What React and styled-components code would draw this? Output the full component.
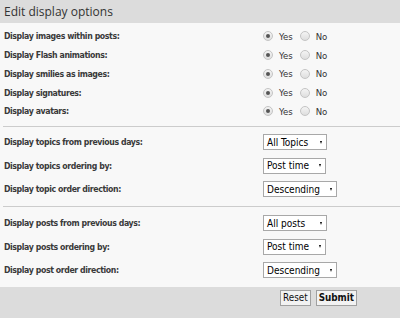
import styled, { createGlobalStyle } from "styled-components";

const GlobalStyle = createGlobalStyle`
	html, body {
		margin: 0;
		padding: 0;
		background: #f8f8f8;
	}
`;

const Panel = styled.div`
	width: 400px;
	height: 318px;
	background: #f8f8f8;
	font-family: "DejaVu Sans Condensed", "DejaVu Sans", sans-serif;
	color: #333;
	display: flex;
	flex-direction: column;
`;

const Header = styled.div`
	height: 23px;
	background: #dcdcdc;
	display: flex;
	align-items: center;
	padding-left: 4px;
	font-family: "Open Sans", sans-serif;
	font-size: 12px;
	color: #333;
`;

const Section = styled.div`
	padding: ${({ $pad }) => $pad};
	margin-left: 3px;
	border-bottom: ${({ $last }) => ($last ? "none" : "1px solid #cccccc")};
`;

const Row = styled.div`
	display: grid;
	grid-template-columns: 260px 1fr;
	align-items: center;
	height: ${({ $h }) => $h}px;
`;

const Label = styled.div`
	padding-left: 1px;
	font-size: 8.7px;
	font-weight: bold;
	letter-spacing: -0.4px;
	color: #3a3a3a;
	white-space: nowrap;
`;

const Options = styled.div`
	display: flex;
	align-items: center;
	font-size: 9.5px;
	color: #333;
`;

const Radio = styled.span`
	width: 8px;
	height: 8px;
	border-radius: 50%;
	border: 1px solid #c4c4c4;
	background: linear-gradient(#f4f4f4, #dedede);
	display: inline-flex;
	align-items: center;
	justify-content: center;
	margin-right: 6px;
	&::after {
		content: "";
		width: 4px;
		height: 4px;
		border-radius: 50%;
		background: ${({ $checked }) => ($checked ? "#555" : "transparent")};
	}
`;

const OptionText = styled.span`
	margin-right: ${({ $gap }) => $gap || 0}px;
`;

const SelectBox = styled.div`
	width: ${({ $w }) => $w}px;
	height: 16px;
	box-sizing: border-box;
	border: 1px solid #a8a8a8;
	background: #fff;
	display: flex;
	align-items: center;
	justify-content: space-between;
	padding: 0 4px 0 3px;
	font-size: 10px;
	color: #000;
	&::after {
		content: "";
		width: 0;
		height: 0;
		border-left: 1.5px solid transparent;
		border-right: 1.5px solid transparent;
		border-top: 3px solid #000;
	}
`;

const Footer = styled.div`
	flex: 1;
	background: #dcdcdc;
	display: flex;
	justify-content: flex-end;
	align-items: flex-start;
	gap: 5px;
	padding: 3px 43px 0 0;
`;

const Button = styled.button`
	height: 16px;
	padding: 0 2px;
	border: 1px solid #a0a0a0;
	background: #f2f2f2;
	font-family: "DejaVu Sans Condensed", "DejaVu Sans", sans-serif;
	font-size: 9.8px;
	font-weight: ${({ $primary }) => ($primary ? "bold" : "normal")};
	color: #111;
	cursor: pointer;
`;

const yesNo = [
	"Display images within posts:",
	"Display Flash animations:",
	"Display smilies as images:",
	"Display signatures:",
	"Display avatars:",
];

const topics = [
	["Display topics from previous days:", "All Topics", 64],
	["Display topics ordering by:", "Post time", 63],
	["Display topic order direction:", "Descending", 74],
];

const posts = [
	["Display posts from previous days:", "All posts", 64],
	["Display posts ordering by:", "Post time", 63],
	["Display post order direction:", "Descending", 74],
];

const App = () => {
	return (
		<Panel>
			<GlobalStyle />
			<Header>Edit display options</Header>
			<Section $pad="4px 0 5px">
				{yesNo.map((label) => (
					<Row key={label} $h={18.75}>
						<Label>{label}</Label>
						<Options>
							<Radio $checked />
							<OptionText $gap={7}>Yes</OptionText>
							<Radio />
							<OptionText>No</OptionText>
						</Options>
					</Row>
				))}
			</Section>
			<Section $pad="3.5px 0 5.5px">
				{topics.map(([label, value, w]) => (
					<Row key={label} $h={23.5}>
						<Label>{label}</Label>
						<SelectBox $w={w}>{value}</SelectBox>
					</Row>
				))}
			</Section>
			<Section $pad="4px 0 5px" $last>
				{posts.map(([label, value, w]) => (
					<Row key={label} $h={23.5}>
						<Label>{label}</Label>
						<SelectBox $w={w}>{value}</SelectBox>
					</Row>
				))}
			</Section>
			<Footer>
				<Button>Reset</Button>
				<Button $primary>Submit</Button>
			</Footer>
		</Panel>
	);
};

export default App;
